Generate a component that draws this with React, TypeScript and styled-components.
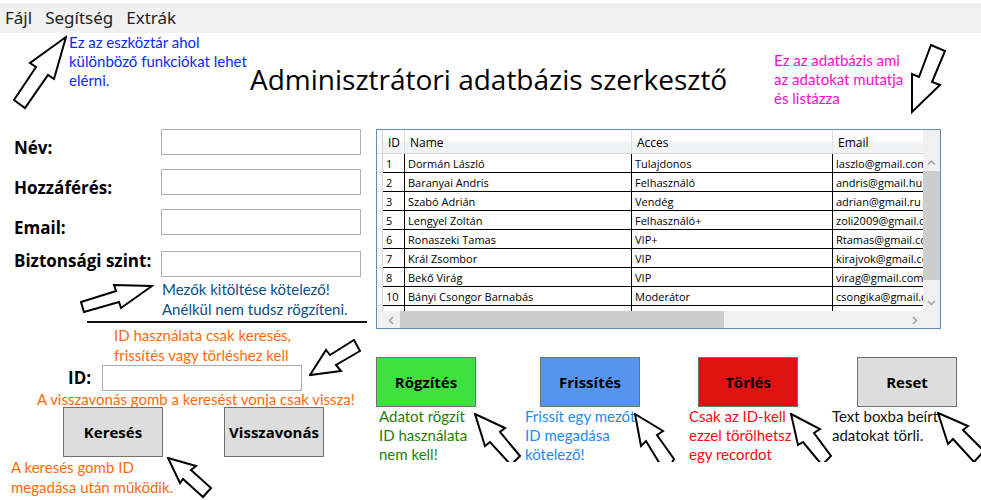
import React from "react";
import styled, { createGlobalStyle } from "styled-components";

const GlobalStyle = createGlobalStyle`
  *, *::before, *::after { box-sizing: border-box; }
  body {
    margin: 0;
    background: #fff;
    color: #000;
    font-family: "Open Sans", "Noto Sans", sans-serif;
  }
`;

const Page = styled.div`
  padding-top: 3px;
  overflow: hidden;
`;

const MenuBar = styled.nav`
  display: flex;
  align-items: center;
  gap: 13px;
  height: 30px;
  padding: 0 5px;
  background: #f0f0f0;
`;

const MenuItem = styled.button`
  padding: 0;
  border: 0;
  background: none;
  color: #212121;
  font: 400 17px/28px "Noto Sans", sans-serif;
`;

const Header = styled.header`
  display: grid;
  grid-template-columns: 237fr 524fr 207fr;
  align-items: start;
  height: 96px;
  padding-left: 13px;
`;

const Callout = styled.div<{ $top?: number; $gap?: number; $center?: boolean }>`
  display: flex;
  align-items: ${(p) => (p.$center ? "center" : "flex-start")};
  gap: ${(p) => p.$gap ?? 2}px;
  padding-top: ${(p) => p.$top ?? 0}px;
`;

const Title = styled.h1`
  margin: 0;
  padding-top: 26px;
  font-size: 28px;
  line-height: 40px;
  font-weight: 400;
  white-space: nowrap;
`;

const Note = styled.p<{ $color: string; $line?: number }>`
  margin: 0;
  color: ${(p) => p.$color};
  font-family: Lato, "Noto Sans", sans-serif;
  font-size: 15px;
  line-height: ${(p) => p.$line ?? 20}px;
  white-space: nowrap;
`;

const ArrowSvg = styled.svg`
  display: block;
  flex: none;
  fill: #fff;
  stroke: #000;
  stroke-width: 2;
`;

const Main = styled.main`
  display: grid;
  grid-template-columns: minmax(366px, 376fr) 605fr;
`;

const FormColumn = styled.form`
  min-width: 0;
`;

const Field = styled.div<{ $height: number }>`
  display: grid;
  grid-template-columns: 147px 200px;
  align-items: start;
  height: ${(p) => p.$height}px;
  margin-left: 14px;
`;

const Label = styled.label<{ $raised?: boolean }>`
  margin-top: ${(p) => (p.$raised ? 0 : 6)}px;
  font-size: 17px;
  line-height: ${(p) => (p.$raised ? 20 : 26)}px;
  font-weight: 700;
  white-space: nowrap;
`;

const TextBox = styled.input`
  width: 200px;
  height: 26px;
  padding: 0 4px;
  border: 1px solid #abadb3;
  background: #fff;
  font: inherit;
  font-size: 15px;
`;

const FieldHint = styled(Callout)`
  margin-left: 80px;
  height: 42px;
`;

const HintArrow = styled.div`
  padding-top: 5px;
`;

const Divider = styled.hr`
  width: 280px;
  height: 2px;
  margin: 2px 0 2px 87px;
  border: 0;
  background: #111;
`;

const SearchHint = styled.div`
  position: relative;
  padding-left: 114px;
`;

const OverlayArrow = styled.div<{ $left: number; $top: number }>`
  position: absolute;
  left: ${(p) => p.$left}px;
  top: ${(p) => p.$top}px;
  pointer-events: none;
`;

const IdRow = styled.div`
  display: flex;
  align-items: center;
  gap: 9px;
  padding-left: 68px;
`;

const IdLabel = styled.label`
  width: 25px;
  font-size: 17px;
  line-height: 26px;
  font-weight: 700;
`;

const UndoHint = styled.div`
  padding-left: 37px;
`;

const SearchButtons = styled.div`
  display: flex;
  gap: 61px;
  padding-left: 63px;
`;

const ActionButton = styled.button<{ $color?: string }>`
  width: 100px;
  height: 50px;
  padding: 0;
  border: 1px solid #707070;
  background: ${(p) => p.$color ?? "#dddddd"};
  color: #000;
  font: 700 15px/20px "Open Sans", sans-serif;
  white-space: nowrap;
`;

const SearchFooter = styled(Callout)`
  padding-left: 11px;
`;

const FooterText = styled.div`
  width: 154px;
`;

const DataColumn = styled.div`
  min-width: 0;
`;

const GridFrame = styled.section`
  display: grid;
  grid-template-columns: minmax(0, 1fr) 17px;
  grid-template-rows: minmax(0, 1fr) 17px;
  height: 200px;
  margin-right: 40px;
  border: 1px solid #688caf;
  background: #f0f0f0;
`;

const GridViewport = styled.div`
  overflow: hidden;
  background: #fff;
`;

const Table = styled.table`
  width: 680px;
  table-layout: fixed;
  border-collapse: separate;
  border-spacing: 0;
  font-size: 11px;
  line-height: 17px;
`;

const Col = styled.col<{ $width: number }>`
  width: ${(p) => p.$width}px;
`;

const HeadCell = styled.th`
  height: 24px;
  padding: 2px 0 0 5px;
  border-right: 1px solid #dedfe1;
  border-bottom: 1px solid #d5d5d5;
  background: linear-gradient(#ffffff 40%, #f1f2f4 60%);
  font-size: 12px;
  font-weight: 400;
  text-align: left;
`;

const RowHead = styled.td`
  padding: 0;
  border-right: 1px solid #d5d5d5;
  border-bottom: 1px solid #e4e4e4;
  background: #f9f9fa;
`;

const Cell = styled.td`
  height: 19px;
  padding: 1px 3px 0;
  border-right: 1px solid #000;
  border-bottom: 1px solid #000;
  white-space: nowrap;
`;

const VerticalBar = styled.div`
  display: flex;
  flex-direction: column;
  padding-top: 23px;
`;

const HorizontalBar = styled.div`
  display: flex;
  padding-left: 6px;
`;

const BarButton = styled.button`
  display: grid;
  place-items: center;
  flex: none;
  width: 17px;
  height: 18px;
  padding: 0;
  border: 0;
  background: none;
  color: #a0a0a0;
`;

const Track = styled.div`
  display: flex;
  flex: 1;
`;

const VerticalThumb = styled.div`
  width: 17px;
  height: 89%;
  background: #cdcdcd;
`;

const HorizontalThumb = styled.div`
  width: 64%;
  height: 17px;
  background: #cdcdcd;
`;

const Actions = styled.div`
  display: grid;
  grid-template-columns: 149fr 164fr 143fr 149fr;
  margin-top: 28px;
`;

const ActionCell = styled.div<{ $indent: number }>`
  min-width: 0;
  padding-left: ${(p) => p.$indent}px;
`;

const ActionAnchor = styled.div`
  position: relative;
  width: 100px;
`;

const ActionNote = styled.div<{ $outdent: number }>`
  margin-left: ${(p) => p.$outdent}px;
`;

function Arrow({ w, h, points }: { w: number; h: number; points: string }) {
  return (
    <ArrowSvg width={w} height={h} viewBox={`0 0 ${w} ${h}`} aria-hidden="true">
      <polygon points={points} />
    </ArrowSvg>
  );
}

function Chevron({ d }: { d: string }) {
  return (
    <svg width="9" height="9" viewBox="0 0 9 9" fill="none" stroke="currentColor" strokeWidth="1.5" aria-hidden="true">
      <path d={d} />
    </svg>
  );
}

const fields = [
  { id: "name", label: "Név:", height: 40 },
  { id: "access", label: "Hozzáférés:", height: 40 },
  { id: "email", label: "Email:", height: 42 },
  { id: "level", label: "Biztonsági szint:", height: 26, raised: true },
];

const rows = [
  ["1", "Dormán László", "Tulajdonos", "laszlo@gmail.com"],
  ["2", "Baranyai Andris", "Felhasználó", "andris@gmail.hu"],
  ["3", "Szabó Adrián", "Vendég", "adrian@gmail.ru"],
  ["5", "Lengyel Zoltán", "Felhasználó+", "zoli2009@gmail.com"],
  ["6", "Ronaszeki Tamas", "VIP+", "Rtamas@gmail.com"],
  ["7", "Král Zsombor", "VIP", "kirajvok@gmail.com"],
  ["8", "Bekő Virág", "VIP", "virag@gmail.com"],
  ["10", "Bányi Csongor Barnabás", "Moderátor", "csongika@gmail.com"],
  ["", "", "", ""],
];

const actions = [
  {
    label: "Rögzítés", color: "#40e040", indent: 0, outdent: 3, noteColor: "#22800a",
    lines: ["Adatot rögzít", "ID használata", "nem kell!"],
    left: 98, arrowTop: 56, w: 48, h: 49,
    points: "1,1 31,15 26,19 46,43 37,52 16,29 11,33",
  },
  {
    label: "Frissítés", color: "#5595ee", indent: 15, outdent: -15, noteColor: "#1a8cf0",
    lines: ["Frissít egy mezőt", "ID megadása", "kötelező!"],
    left: 94, arrowTop: 56, w: 42, h: 49,
    points: "1,1 29,18 23,22 40,46 32,61 12,28 7,33",
  },
  {
    label: "Törlés", color: "#e01212", indent: 9, outdent: -9, noteColor: "#ff0a14",
    lines: ["Csak az ID-kell", "ezzel törölhetsz", "egy recordot"],
    left: 92, arrowTop: 56, w: 43, h: 49,
    points: "1,1 30,16 24,20 41,43 32,52 13,29 8,32",
  },
  {
    label: "Reset", color: "#dddddd", indent: 25, outdent: -25, noteColor: "#111111",
    lines: ["Text boxba beírt", "adatokat törli."],
    left: 80, arrowTop: 55, w: 48, h: 50,
    points: "1,1 31,14 26,18 47,39 37,50 16,27 11,32",
  },
];

function Lines({ items }: { items: string[] }) {
  return (
    <>
      {items.map((line, i) => (
        <React.Fragment key={line}>
          {i > 0 && <br />}
          {line}
        </React.Fragment>
      ))}
    </>
  );
}

function DataGrid() {
  return (
    <GridFrame>
      <GridViewport>
        <Table>
          <colgroup>
            <Col $width={6} />
            <Col $width={22} />
            <Col $width={227} />
            <Col $width={201} />
            <Col $width={224} />
          </colgroup>
          <thead>
            <tr>
              <RowHead />
              <HeadCell>ID</HeadCell>
              <HeadCell>Name</HeadCell>
              <HeadCell>Acces</HeadCell>
              <HeadCell>Email</HeadCell>
            </tr>
          </thead>
          <tbody>
            {rows.map((row, r) => (
              <tr key={r}>
                <RowHead />
                {row.map((value, c) => (
                  <Cell key={c}>{value}</Cell>
                ))}
              </tr>
            ))}
          </tbody>
        </Table>
      </GridViewport>
      <VerticalBar>
        <BarButton type="button" aria-label="Fel"><Chevron d="M1 6.5 4.5 3 8 6.5" /></BarButton>
        <Track><VerticalThumb /></Track>
        <BarButton type="button" aria-label="Le"><Chevron d="M1 3 4.5 6.5 8 3" /></BarButton>
      </VerticalBar>
      <HorizontalBar>
        <BarButton type="button" aria-label="Balra"><Chevron d="M6 1 2.5 4.5 6 8" /></BarButton>
        <Track><HorizontalThumb /></Track>
        <BarButton type="button" aria-label="Jobbra"><Chevron d="M3 1 6.5 4.5 3 8" /></BarButton>
      </HorizontalBar>
    </GridFrame>
  );
}

export default function App() {
  return (
    <Page>
      <GlobalStyle />
      <MenuBar>
        <MenuItem type="button">Fájl</MenuItem>
        <MenuItem type="button">Segítség</MenuItem>
        <MenuItem type="button">Extrák</MenuItem>
      </MenuBar>
      <Header>
        <Callout>
          <Arrow w={54} h={77} points="53,4 17,30 23,34 1,67 12,75 35,42 41,46" />
          <Note $color="#0a28ff" $line={19}>
            <Lines items={["Ez az eszköztár ahol", "különböző funkciókat lehet", "elérni."]} />
          </Note>
        </Callout>
        <Title>Adminisztrátori adatbázis szerkesztő</Title>
        <Callout $top={11} $gap={8} $center>
          <Note $color="#ff0ad2" $line={19}>
            <Lines items={["Ez az adatbázis ami", "az adatokat mutatja", "és listázza"]} />
          </Note>
          <Arrow w={36} h={70} points="20,1 34,7 21,38 29,41 1,68 1,30 8,33" />
        </Callout>
      </Header>
      <Main>
        <FormColumn>
          {fields.map((f) => (
            <Field key={f.id} $height={f.height}>
              <Label htmlFor={f.id} $raised={f.raised}>{f.label}</Label>
              <TextBox id={f.id} type="text" />
            </Field>
          ))}
          <FieldHint $top={2} $gap={8}>
            <HintArrow>
              <Arrow w={74} h={30} points="72,2 34,1 36,7 1,18 4,28 39,18 41,24" />
            </HintArrow>
            <Note $color="#0a4f85">
              <Lines items={["Mezők kitöltése kötelező!", "Anélkül nem tudsz rögzíteni."]} />
            </Note>
          </FieldHint>
          <Divider />
          <SearchHint>
            <Note $color="#ff6a0a">
              <Lines items={["ID használata csak keresés,", "frissítés vagy törléshez kell"]} />
            </Note>
            <OverlayArrow $left={309} $top={14}>
              <Arrow w={53} h={38} points="1,36 17,11 21,16 45,1 51,12 27,26 32,32" />
            </OverlayArrow>
          </SearchHint>
          <IdRow>
            <IdLabel htmlFor="record-id">ID:</IdLabel>
            <TextBox id="record-id" type="text" />
          </IdRow>
          <UndoHint>
            <Note $color="#ff6a0a" $line={16}>A visszavonás gomb a keresést vonja csak vissza!</Note>
          </UndoHint>
          <SearchButtons>
            <ActionButton type="button">Keresés</ActionButton>
            <ActionButton type="button">Visszavonás</ActionButton>
          </SearchButtons>
          <SearchFooter>
            <FooterText>
              <Note $color="#ff6a0a">
                <Lines items={["A keresés gomb ID", "megadása után működik."]} />
              </Note>
            </FooterText>
            <Arrow w={46} h={42} points="1,1 29,9 24,13 44,31 36,40 16,22 13,26" />
          </SearchFooter>
        </FormColumn>
        <DataColumn>
          <DataGrid />
          <Actions>
            {actions.map((a) => (
              <ActionCell key={a.label} $indent={a.indent}>
                <ActionAnchor>
                  <ActionButton type="button" $color={a.color}>{a.label}</ActionButton>
                  <ActionNote $outdent={a.outdent}>
                    <Note $color={a.noteColor} $line={19}><Lines items={a.lines} /></Note>
                  </ActionNote>
                  <OverlayArrow $left={a.left} $top={a.arrowTop}>
                    <Arrow w={a.w} h={a.h} points={a.points} />
                  </OverlayArrow>
                </ActionAnchor>
              </ActionCell>
            ))}
          </Actions>
        </DataColumn>
      </Main>
    </Page>
  );
}
